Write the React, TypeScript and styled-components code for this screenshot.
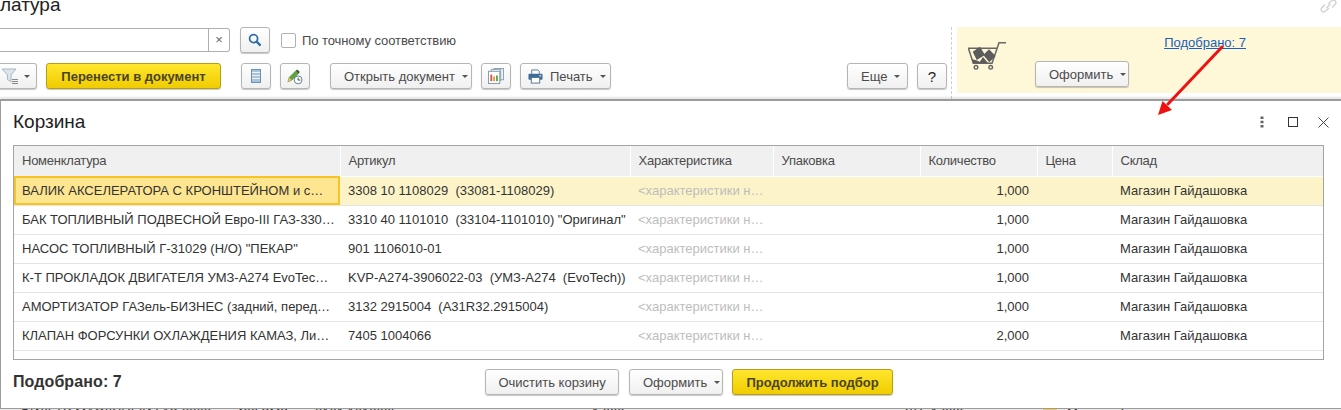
import styled, { createGlobalStyle } from 'styled-components';

const GlobalStyle = createGlobalStyle`
  html, body {
    margin: 0;
    padding: 0;
    background: #fff;
    overflow: hidden;
  }
  body {
    font-family: 'Liberation Sans', Arial, sans-serif;
    font-size: 13px;
    color: #333;
  }
`;

const rows = [
  {
    name: 'ВАЛИК АКСЕЛЕРАТОРА С КРОНШТЕЙНОМ и с…',
    article: '3308 10 1108029  (33081-1108029)',
    qty: '1,000',
  },
  {
    name: 'БАК ТОПЛИВНЫЙ ПОДВЕСНОЙ Евро-III ГАЗ-330…',
    article: '3310 40 1101010  (33104-1101010) "Оригинал"',
    qty: '1,000',
  },
  { name: 'НАСОС ТОПЛИВНЫЙ Г-31029 (Н/О) "ПЕКАР"', article: '901 1106010-01', qty: '1,000' },
  {
    name: 'К-Т ПРОКЛАДОК ДВИГАТЕЛЯ УМЗ-А274 EvoTec…',
    article: 'KVP-A274-3906022-03  (УМЗ-А274  (EvoTech))',
    qty: '1,000',
  },
  {
    name: 'АМОРТИЗАТОР ГАЗель-БИЗНЕС (задний, перед…',
    article: '3132 2915004  (A31R32.2915004)',
    qty: '1,000',
  },
  {
    name: 'КЛАПАН ФОРСУНКИ ОХЛАЖДЕНИЯ КАМАЗ, Ли…',
    article: '7405 1004066',
    qty: '2,000',
  },
];

const columns = [
  { title: 'Номенклатура', width: 326 },
  { title: 'Артикул', width: 290 },
  { title: 'Характеристика', width: 143 },
  { title: 'Упаковка', width: 147 },
  { title: 'Количество', width: 117 },
  { title: 'Цена', width: 75 },
  { title: 'Склад', width: 211 },
];

const Caret = () => <CaretMark />;

const SearchIcon = () => (
  <svg width="14" height="14" viewBox="0 0 14 14">
    <circle cx="5.6" cy="5.6" r="4" fill="none" stroke="#2f6ea5" strokeWidth="1.8" />
    <path d="M8.6 8.6 L12.6 12.6" stroke="#2f6ea5" strokeWidth="2.2" />
  </svg>
);

const FilterIcon = () => (
  <svg width="18" height="18" viewBox="0 0 18 18">
    <path d="M1 2 H15 L10 8 V15 L6.5 12.5 V8 Z" fill="#dde4ea" stroke="#a9b8c5" />
    <path d="M11 12.5 H17 M11 14.5 H17 M11 16.5 H17" stroke="#8a8a8a" />
  </svg>
);

const ListIcon = () => (
  <svg width="10" height="14" viewBox="0 0 10 14">
    <rect x="0.5" y="0.5" width="9" height="13" fill="#a9c3d8" stroke="#6d8fae" />
    <path d="M1 3.5 H9 M1 6.5 H9 M1 9.5 H9" stroke="#eef4f8" />
  </svg>
);

const PencilClockIcon = () => (
  <svg width="16" height="17" viewBox="0 0 18 18">
    <path d="M1 15 L2.5 10 L10 2.5 L13 5.5 L5.5 13 Z" fill="#5aa53c" stroke="#3e7a28" strokeWidth="0.6" />
    <path d="M10 2.5 L11.5 1 L14.5 4 L13 5.5 Z" fill="#4a4a4a" />
    <path d="M1 15 L2.5 10 L5.5 13 Z" fill="#f2b56b" />
    <circle cx="12.5" cy="12.8" r="4.4" fill="#fff" stroke="#50708c" />
    <path d="M12.5 10.3 V13 H15" fill="none" stroke="#333" />
  </svg>
);

const ReportIcon = () => (
  <svg width="16" height="16" viewBox="0 0 17 17">
    <rect x="6.5" y="0.5" width="10" height="12" fill="#eef2f5" stroke="#8aa0b3" />
    <rect x="3.5" y="1.5" width="10" height="12" fill="#eef2f5" stroke="#8aa0b3" />
    <rect x="0.5" y="3.5" width="12" height="13" fill="#fff" stroke="#7f98ad" />
    <rect x="2.5" y="7" width="2" height="7" fill="#d9534a" />
    <rect x="5.5" y="9" width="2" height="5" fill="#e0a030" />
    <rect x="8.5" y="8" width="2" height="6" fill="#58a84a" />
  </svg>
);

const PrinterIcon = () => (
  <svg width="15" height="15" viewBox="0 0 16 16">
    <path d="M4 5 V1 H10.5 L12 2.5 V5" fill="#fff" stroke="#4f7394" />
    <rect x="0.5" y="5" width="15" height="6.5" rx="1" fill="#3e6d99" />
    <rect x="3.5" y="9" width="9" height="6" fill="#fff" stroke="#4f7394" />
    <rect x="12" y="6.5" width="2" height="1.4" fill="#cfe0ee" />
  </svg>
);

const CartIcon = () => (
  <svg width="38" height="28" viewBox="0 0 38 28">
    <path d="M38 0.8 H31 L24 21.3 H5.3 L0.4 6.3 H28.7" fill="none" stroke="#666" strokeWidth="1.5" />
    <path d="M4.7 9.7 L12 4.7 L17 13 L8.7 18 Z" fill="#5c5c5c" />
    <path d="M15.3 13 L21 7.3 L27.7 14 L21.3 20.3 Z" fill="#5c5c5c" />
    <path d="M3.7 17 L9 18.5 L14 21 H5 Z" fill="#5c5c5c" />
    <path d="M11 21 L15 15 L20 21 Z" fill="#5c5c5c" />
    <circle cx="8" cy="25.3" r="1.8" fill="none" stroke="#666" strokeWidth="1.4" />
    <circle cx="22.7" cy="25.3" r="1.8" fill="none" stroke="#666" strokeWidth="1.4" />
  </svg>
);

const LinkIcon = () => (
  <svg width="19" height="14" viewBox="0 0 19 14">
    <g fill="none" stroke="#d0d0d0" strokeWidth="1.3">
      <path d="M9 5 L13 1.5 C15 0 18 2.5 16.5 5 L13 8.5" />
      <path d="M10 9 L6 12.5 C4 14 1 11.5 2.5 9 L6 5.5" />
      <path d="M7.5 9 L11.5 5" />
    </g>
  </svg>
);

const App = () => {
  return (
    <Page>
      <GlobalStyle />
      <TopArea>
        <Workspace>
          <Title>Номенклатура</Title>
          <SearchRow>
            <SearchField>
              <SearchInput />
              <ClearCell>×</ClearCell>
            </SearchField>
            <IconButton>
              <SearchIcon />
            </IconButton>
            <CheckBox />
            <CheckLabel>По точному соответствию</CheckLabel>
          </SearchRow>
          <CommandBar>
            <FilterButton>
              <FilterIcon />
              <Caret />
            </FilterButton>
            <PrimaryButton $width={175}>Перенести в документ</PrimaryButton>
            <IconButton $wide>
              <ListIcon />
            </IconButton>
            <IconButton>
              <PencilClockIcon />
            </IconButton>
            <DropButton $width={142} $wide>
              Открыть документ
              <Caret />
            </DropButton>
            <IconButton>
              <ReportIcon />
            </IconButton>
            <PrintButton $width={91}>
              <PrinterIcon />
              Печать
              <Caret />
            </PrintButton>
            <Spacer />
            <DropButton $width={61}>
              Еще
              <Caret />
            </DropButton>
            <HelpButton>?</HelpButton>
          </CommandBar>
        </Workspace>
        <DashedLine />
        <CartPanel>
          <CartPicture>
            <CartIcon />
          </CartPicture>
          <CartActions>
            <CartLink>Подобрано: 7</CartLink>
            <DropButton $width={94}>
              Оформить
              <Caret />
            </DropButton>
          </CartActions>
        </CartPanel>
        <LinkCorner>
          <LinkIcon />
        </LinkCorner>
      </TopArea>

      <Modal>
        <ModalHeader>
          <ModalTitle>Корзина</ModalTitle>
          <WindowTools>
            <svg width="4" height="12" viewBox="0 0 4 12">
              <path d="M0.5 0.5 H3.5 V3 H0.5 Z M0.5 4.7 H3.5 V7.2 H0.5 Z M0.5 9 H3.5 V11.5 H0.5 Z" fill="#666" />
            </svg>
            <svg width="10" height="10" viewBox="0 0 10 10">
              <rect x="0.5" y="0.5" width="9" height="9" fill="none" stroke="#333" />
            </svg>
            <svg width="11" height="11" viewBox="0 0 11 11">
              <path d="M0.5 0.5 L10.5 10.5 M10.5 0.5 L0.5 10.5" stroke="#444" />
            </svg>
          </WindowTools>
        </ModalHeader>

        <TableBox>
          <CartTable>
            <colgroup>
              {columns.map((c) => (
                <col key={c.title} width={c.width} />
              ))}
            </colgroup>
            <thead>
              <tr>
                {columns.map((c) => (
                  <HeadCell key={c.title}>{c.title}</HeadCell>
                ))}
              </tr>
            </thead>
            <tbody>
              {rows.map((r, i) => (
                <Row key={r.article} $active={i === 0}>
                  <NameCell $active={i === 0}>{r.name}</NameCell>
                  <Cell>{r.article}</Cell>
                  <HintCell>&lt;характеристики н…</HintCell>
                  <Cell />
                  <QtyCell>{r.qty}</QtyCell>
                  <Cell />
                  <Cell>Магазин Гайдашовка</Cell>
                </Row>
              ))}
            </tbody>
          </CartTable>
        </TableBox>

        <ModalFooter>
          <Total>Подобрано: 7</Total>
          <Button $width={134}>Очистить корзину</Button>
          <DropButton $width={94}>
            Оформить
            <Caret />
          </DropButton>
          <FooterPrimary $width={161}>Продолжить подбор</FooterPrimary>
        </ModalFooter>
      </Modal>

      <Arrow width="80" height="80" viewBox="0 0 80 80">
        <path d="M66 2 L12 59" stroke="#f01010" strokeWidth="3" strokeLinecap="round" />
        <path d="M2 70 L6.5 56 L16 65 Z" fill="#f01010" />
      </Arrow>

      <CutLine>
        <span />
        <span>ФИЛЬТР МАСЛЯНЫЙ ГАЗ-3302 дв. 406 ЗМЗ</span>
        <span>2101 1012005</span>
        <span>1,000</span>
        <span>ШТ. 1,000</span>
        <CutMark />
        <span />
        <span>Магазин Гайдашовка</span>
      </CutLine>
    </Page>
  );
};

export default App;

const Page = styled.div`
  position: relative;
  width: 1341px;
  height: 410px;
  overflow: hidden;
  display: flex;
  flex-direction: column;
`;

const TopArea = styled.div`
  position: relative;
  height: 99px;
  flex: none;
  display: flex;
`;

const Workspace = styled.div`
  width: 947px;
  flex: none;
`;

const Title = styled.div`
  margin: -5px 0 12px -67px;
  height: 20px;
  line-height: 20px;
  font-size: 19px;
  color: #222;
  white-space: nowrap;
`;

const SearchRow = styled.div`
  height: 26px;
  display: flex;
  align-items: center;
  gap: 10px;
`;

const SearchField = styled.div`
  width: 230px;
  height: 24px;
  box-sizing: border-box;
  display: flex;
  border: 1px solid #b0b0b0;
  border-left: none;
  border-radius: 0 3px 3px 0;
`;

const SearchInput = styled.div`
  flex: 1;
`;

const ClearCell = styled.div`
  width: 20px;
  border-left: 1px solid #b0b0b0;
  text-align: center;
  line-height: 21px;
  font-size: 13px;
  color: #666;
`;

const CheckBox = styled.div`
  width: 15px;
  height: 15px;
  box-sizing: border-box;
  margin-left: 1px;
  border: 1px solid #b0b0b0;
  border-radius: 2px;
  background: #fff;
`;

const CheckLabel = styled.div`
  margin-left: -4px;
  letter-spacing: -0.08px;
  color: #4b4b4b;
`;

const CommandBar = styled.div`
  height: 26px;
  margin-top: 10px;
  display: flex;
  gap: 9px;
`;

const Spacer = styled.div`
  flex: 1;
`;

const Button = styled.div<{ $width?: number; $wide?: boolean }>`
  width: ${(p) => (p.$width ? `${p.$width}px` : 'auto')};
  height: 26px;
  box-sizing: border-box;
  flex: none;
  display: flex;
  align-items: center;
  justify-content: center;
  gap: 7px;
  margin-left: ${(p) => (p.$wide ? '11px' : '0')};
  border: 1px solid #b5b5b5;
  border-radius: 3px;
  background: linear-gradient(#ffffff, #f0f0f0);
  box-shadow: 0 1px 1px rgba(0, 0, 0, 0.22);
  color: #4b4b4b;
  white-space: nowrap;
`;

const DropButton = styled(Button)`
  justify-content: flex-start;
  padding-left: 13px;
`;

const PrintButton = styled(Button)`
  justify-content: flex-start;
  padding-left: 7px;
`;

const IconButton = styled(Button)`
  width: 30px;
`;

const FilterButton = styled(Button)`
  width: 42px;
  margin-left: -5px;
  gap: 5px;
  border-left: none;
  border-radius: 0 3px 3px 0;
`;

const HelpButton = styled(Button)`
  width: 30px;
  color: #222;
  font-size: 15px;
`;

const PrimaryButton = styled(Button)`
  border-color: #b59f1a;
  background: linear-gradient(#ffe62e, #f0cc00);
  color: #4a4420;
  font-weight: 700;
`;

const FooterPrimary = styled(PrimaryButton)`
  margin-left: -1px;
`;

const CaretMark = styled.span`
  width: 0;
  height: 0;
  margin-top: 1px;
  border-left: 3px solid transparent;
  border-right: 3px solid transparent;
  border-top: 3px solid #555;
`;

const DashedLine = styled.div`
  width: 0;
  height: 72px;
  margin: 27px 5px 0 4px;
  flex: none;
  border-left: 1px dashed #cfcfcf;
`;

const CartPanel = styled.div`
  flex: 1;
  height: 66px;
  margin-top: 27px;
  box-sizing: border-box;
  padding: 8px 0 0 11px;
  display: flex;
  gap: 29px;
  background: #fef8d9;
`;

const CartPicture = styled.div`
  margin-top: 7px;
`;

const CartActions = styled.div`
  width: 211px;
  display: flex;
  flex-direction: column;
  gap: 11px;
`;

const CartLink = styled.a`
  align-self: flex-end;
  line-height: 15px;
  color: #1b5fb8;
  text-decoration: underline;
`;

const LinkCorner = styled.div`
  position: absolute;
  top: -1px;
  right: 3px;
`;

const Modal = styled.div`
  height: 310px;
  width: 1345px;
  flex: none;
  box-sizing: border-box;
  border: 1px solid #9c9c9c;
  border-top-width: 2px;
  background: #fff;
  box-shadow: 0 -2px 2px rgba(0, 0, 0, 0.1);
  position: relative;
`;

const ModalHeader = styled.div`
  height: 44px;
  box-sizing: border-box;
  padding: 0 15px 2px 12px;
  display: flex;
  align-items: center;
  justify-content: space-between;
`;

const ModalTitle = styled.div`
  font-size: 19px;
  color: #222;
`;

const WindowTools = styled.div`
  display: grid;
  grid-template-columns: 28px 30px 11px;
  align-items: center;
`;

const TableBox = styled.div`
  width: 1311px;
  height: 215px;
  margin-left: 12px;
  box-sizing: border-box;
  border: 1px solid #a4a4a4;
  overflow: hidden;
`;

const CartTable = styled.table`
  width: 1309px;
  table-layout: fixed;
  border-collapse: collapse;
`;

const HeadCell = styled.th`
  height: 30px;
  box-sizing: border-box;
  padding: 0 8px;
  border-right: 1px solid #fff;
  border-bottom: 1px solid #fff;
  background: #f0f0f0;
  text-align: left;
  font-weight: 400;
  letter-spacing: -0.25px;
  color: #4b4b4b;
`;

const Row = styled.tr<{ $active?: boolean }>`
  height: 29px;
  background: ${(p) => (p.$active ? '#fdf3c8' : '#fff')};
`;

const Cell = styled.td`
  height: 29px;
  box-sizing: border-box;
  padding: 0 8px;
  border-bottom: 1px solid #e4e4e4;
  white-space: pre;
  overflow: hidden;
  color: #333;
`;

const NameCell = styled(Cell)<{ $active?: boolean }>`
  background: ${(p) => (p.$active ? '#fee58f' : 'transparent')};
  outline: ${(p) => (p.$active ? '2px solid #f9c423' : 'none')};
  outline-offset: -2px;
`;

const HintCell = styled(Cell)`
  color: #bdbdbd;
`;

const QtyCell = styled(Cell)`
  text-align: right;
`;

const ModalFooter = styled.div`
  margin-top: 9px;
  padding-left: 12px;
  display: flex;
  gap: 10px;
  align-items: center;
`;

const Total = styled.div`
  width: 462px;
  flex: none;
  font-size: 16px;
  font-weight: 700;
  letter-spacing: 0.1px;
  color: #333;
`;

const Arrow = styled.svg`
  position: absolute;
  left: 1156px;
  top: 45px;
`;

const CutLine = styled.div`
  height: 1px;
  flex: none;
  overflow: hidden;
  display: grid;
  grid-template-columns: 20px 295px 277px 313px 138px 14px 10px 1fr;
  background: #e8e8e8;
  line-height: 13px;
  white-space: nowrap;
  color: #333;

  span {
    margin-top: -3px;
    overflow: hidden;
  }
`;

const CutMark = styled.div`
  background: #f0cf50;
`;
